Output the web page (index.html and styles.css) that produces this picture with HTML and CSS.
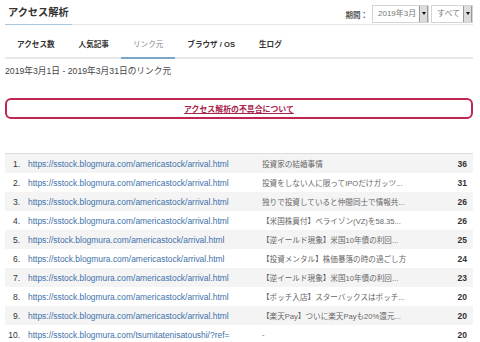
FILE: index.html
```html
<!DOCTYPE html>
<html lang="ja">
<head>
<meta charset="utf-8">
<title>アクセス解析</title>
<link rel="stylesheet" href="styles.css">
</head>
<body>
<div class="page">
  <header class="head">
    <h1 class="title">アクセス解析</h1>
    <div class="controls">
      <span class="label">期間：</span>
      <div class="sel sel-month"><span class="sel-text">2019年3月</span><span class="sel-btn"></span></div>
      <div class="sel sel-all"><span class="sel-text">すべて</span><span class="sel-btn"></span></div>
    </div>
  </header>
  <nav class="tabs">
    <a class="tab">アクセス数</a>
    <a class="tab">人気記事</a>
    <a class="tab active">リンク元</a>
    <a class="tab">ブラウザ / OS</a>
    <a class="tab">生ログ</a>
  </nav>
  <p class="range">2019年3月1日 - 2019年3月31日のリンク元</p>
  <div class="notice"><a class="notice-link">アクセス解析の不具合について</a></div>
  <div class="table">
    <div class="row"><span class="num">1.</span><span class="url">https://sstock.blogmura.com/americastock/arrival.html</span><span class="ttl">投資家の結婚事情</span><span class="cnt">36</span></div>
    <div class="row"><span class="num">2.</span><span class="url">https://sstock.blogmura.com/americastock/arrival.html</span><span class="ttl">投資をしない人に限ってIPOだけガッツ...</span><span class="cnt">31</span></div>
    <div class="row"><span class="num">3.</span><span class="url">https://sstock.blogmura.com/americastock/arrival.html</span><span class="ttl">独りで投資していると仲間同士で情報共...</span><span class="cnt">26</span></div>
    <div class="row"><span class="num">4.</span><span class="url">https://sstock.blogmura.com/americastock/arrival.html</span><span class="ttl">【米国株買付】ベライゾン(VZ)を58.35...</span><span class="cnt">26</span></div>
    <div class="row"><span class="num">5.</span><span class="url">https://stock.blogmura.com/americastock/arrival.html</span><span class="ttl">【逆イールド現象】米国10年債の利回...</span><span class="cnt">25</span></div>
    <div class="row"><span class="num">6.</span><span class="url">https://stock.blogmura.com/americastock/arrival.html</span><span class="ttl">【投資メンタル】株価暴落の時の過ごし方</span><span class="cnt">24</span></div>
    <div class="row"><span class="num">7.</span><span class="url">https://sstock.blogmura.com/americastock/arrival.html</span><span class="ttl">【逆イールド現象】米国10年債の利回...</span><span class="cnt">23</span></div>
    <div class="row"><span class="num">8.</span><span class="url">https://sstock.blogmura.com/americastock/arrival.html</span><span class="ttl">【ポッチ入店】スターバックスはポッチ...</span><span class="cnt">20</span></div>
    <div class="row"><span class="num">9.</span><span class="url">https://sstock.blogmura.com/americastock/arrival.html</span><span class="ttl">【楽天Pay】ついに楽天Payも20%還元...</span><span class="cnt">20</span></div>
    <div class="row"><span class="num">10.</span><span class="url">https://sstock.blogmura.com/tsumitatenisatoushi/?ref=</span><span class="ttl">-</span><span class="cnt">20</span></div>
  </div>
</div>
</body>
</html>
```
FILE: styles.css
```css
* { box-sizing: border-box; }
html, body { margin: 0; padding: 0; background: #fff; }
body {
  font-family: "Liberation Sans", Arial, "Noto Sans CJK JP", sans-serif;
  color: #333;
  font-size: 8px;
}
.page { margin-left: 5px; width: 468px; }

.head {
  display: flex;
  justify-content: space-between;
  align-items: flex-end;
  height: 25px;
  border-bottom: 1px solid #e6e6e6;
}
.title {
  margin: 0 0 -1px 0;
  padding: 0 3px 4px;
  font-size: 10.2px;
  line-height: 15px;
  font-weight: bold;
  color: #333;
  border-bottom: 1px solid #a9c6df;
}
.controls {
  display: flex;
  align-items: center;
  gap: 2px;
  margin-bottom: 1px;
}
.label { font-weight: bold; font-size: 7.5px; color: #555; margin-right: 2px; }
.sel {
  display: flex;
  align-items: stretch;
  height: 18px;
  border: 1px solid #d4d4d4;
  background: #fff;
}
.sel-month { width: 57px; }
.sel-all { width: 42px; }
.sel-text {
  flex: 1;
  padding-left: 5px;
  font-size: 8px;
  line-height: 16px;
  color: #777;
}
.sel-btn {
  width: 9px;
  background: #dcdcdc;
  border-left: 1px solid #999;
  border-right: 1px solid #999;
  position: relative;
}
.sel-btn::after {
  content: "";
  position: absolute;
  left: 1.5px;
  top: 6px;
  border-left: 2.5px solid transparent;
  border-right: 2.5px solid transparent;
  border-top: 3px solid #111;
}

.tabs {
  display: flex;
  border-bottom: 2px solid #e8e8e8;
}
.tab {
  padding: 13px 12px 5px;
  line-height: 14px;
  font-size: 7.6px;
  font-weight: bold;
  color: #333;
}
.tab.active {
  font-weight: normal;
  color: #888;
  border-bottom: 2px solid #7aa6c9;
  margin-bottom: -2px;
}

.range {
  margin: 6px 0 0;
  line-height: 12px;
  font-size: 8.7px;
  color: #444;
}

.notice {
  margin-top: 21px;
  height: 21px;
  border: 2px solid #c0264f;
  border-radius: 6px;
  display: flex;
  align-items: center;
  justify-content: center;
}
.notice-link {
  font-size: 7.9px;
  font-weight: bold;
  color: #a8234a;
  text-decoration: underline;
}

.table {
  margin-top: 34px;
  border-top: 1px solid #dcdcdc;
}
.row {
  display: grid;
  grid-template-columns: 23px 234px 1fr 40px;
  align-items: center;
  height: 19px;
}
.row:nth-child(odd) { background: #f4f4f4; }
.num {
  text-align: right;
  padding-right: 8px;
  font-size: 8.5px;
  color: #333;
}
.url {
  font-size: 8.45px;
  color: #4272aa;
  white-space: nowrap;
}
.ttl {
  font-size: 7.6px;
  color: #666;
  white-space: nowrap;
  overflow: hidden;
}
.cnt {
  text-align: right;
  padding-right: 6px;
  font-size: 8.5px;
  font-weight: bold;
  color: #333;
}
```
